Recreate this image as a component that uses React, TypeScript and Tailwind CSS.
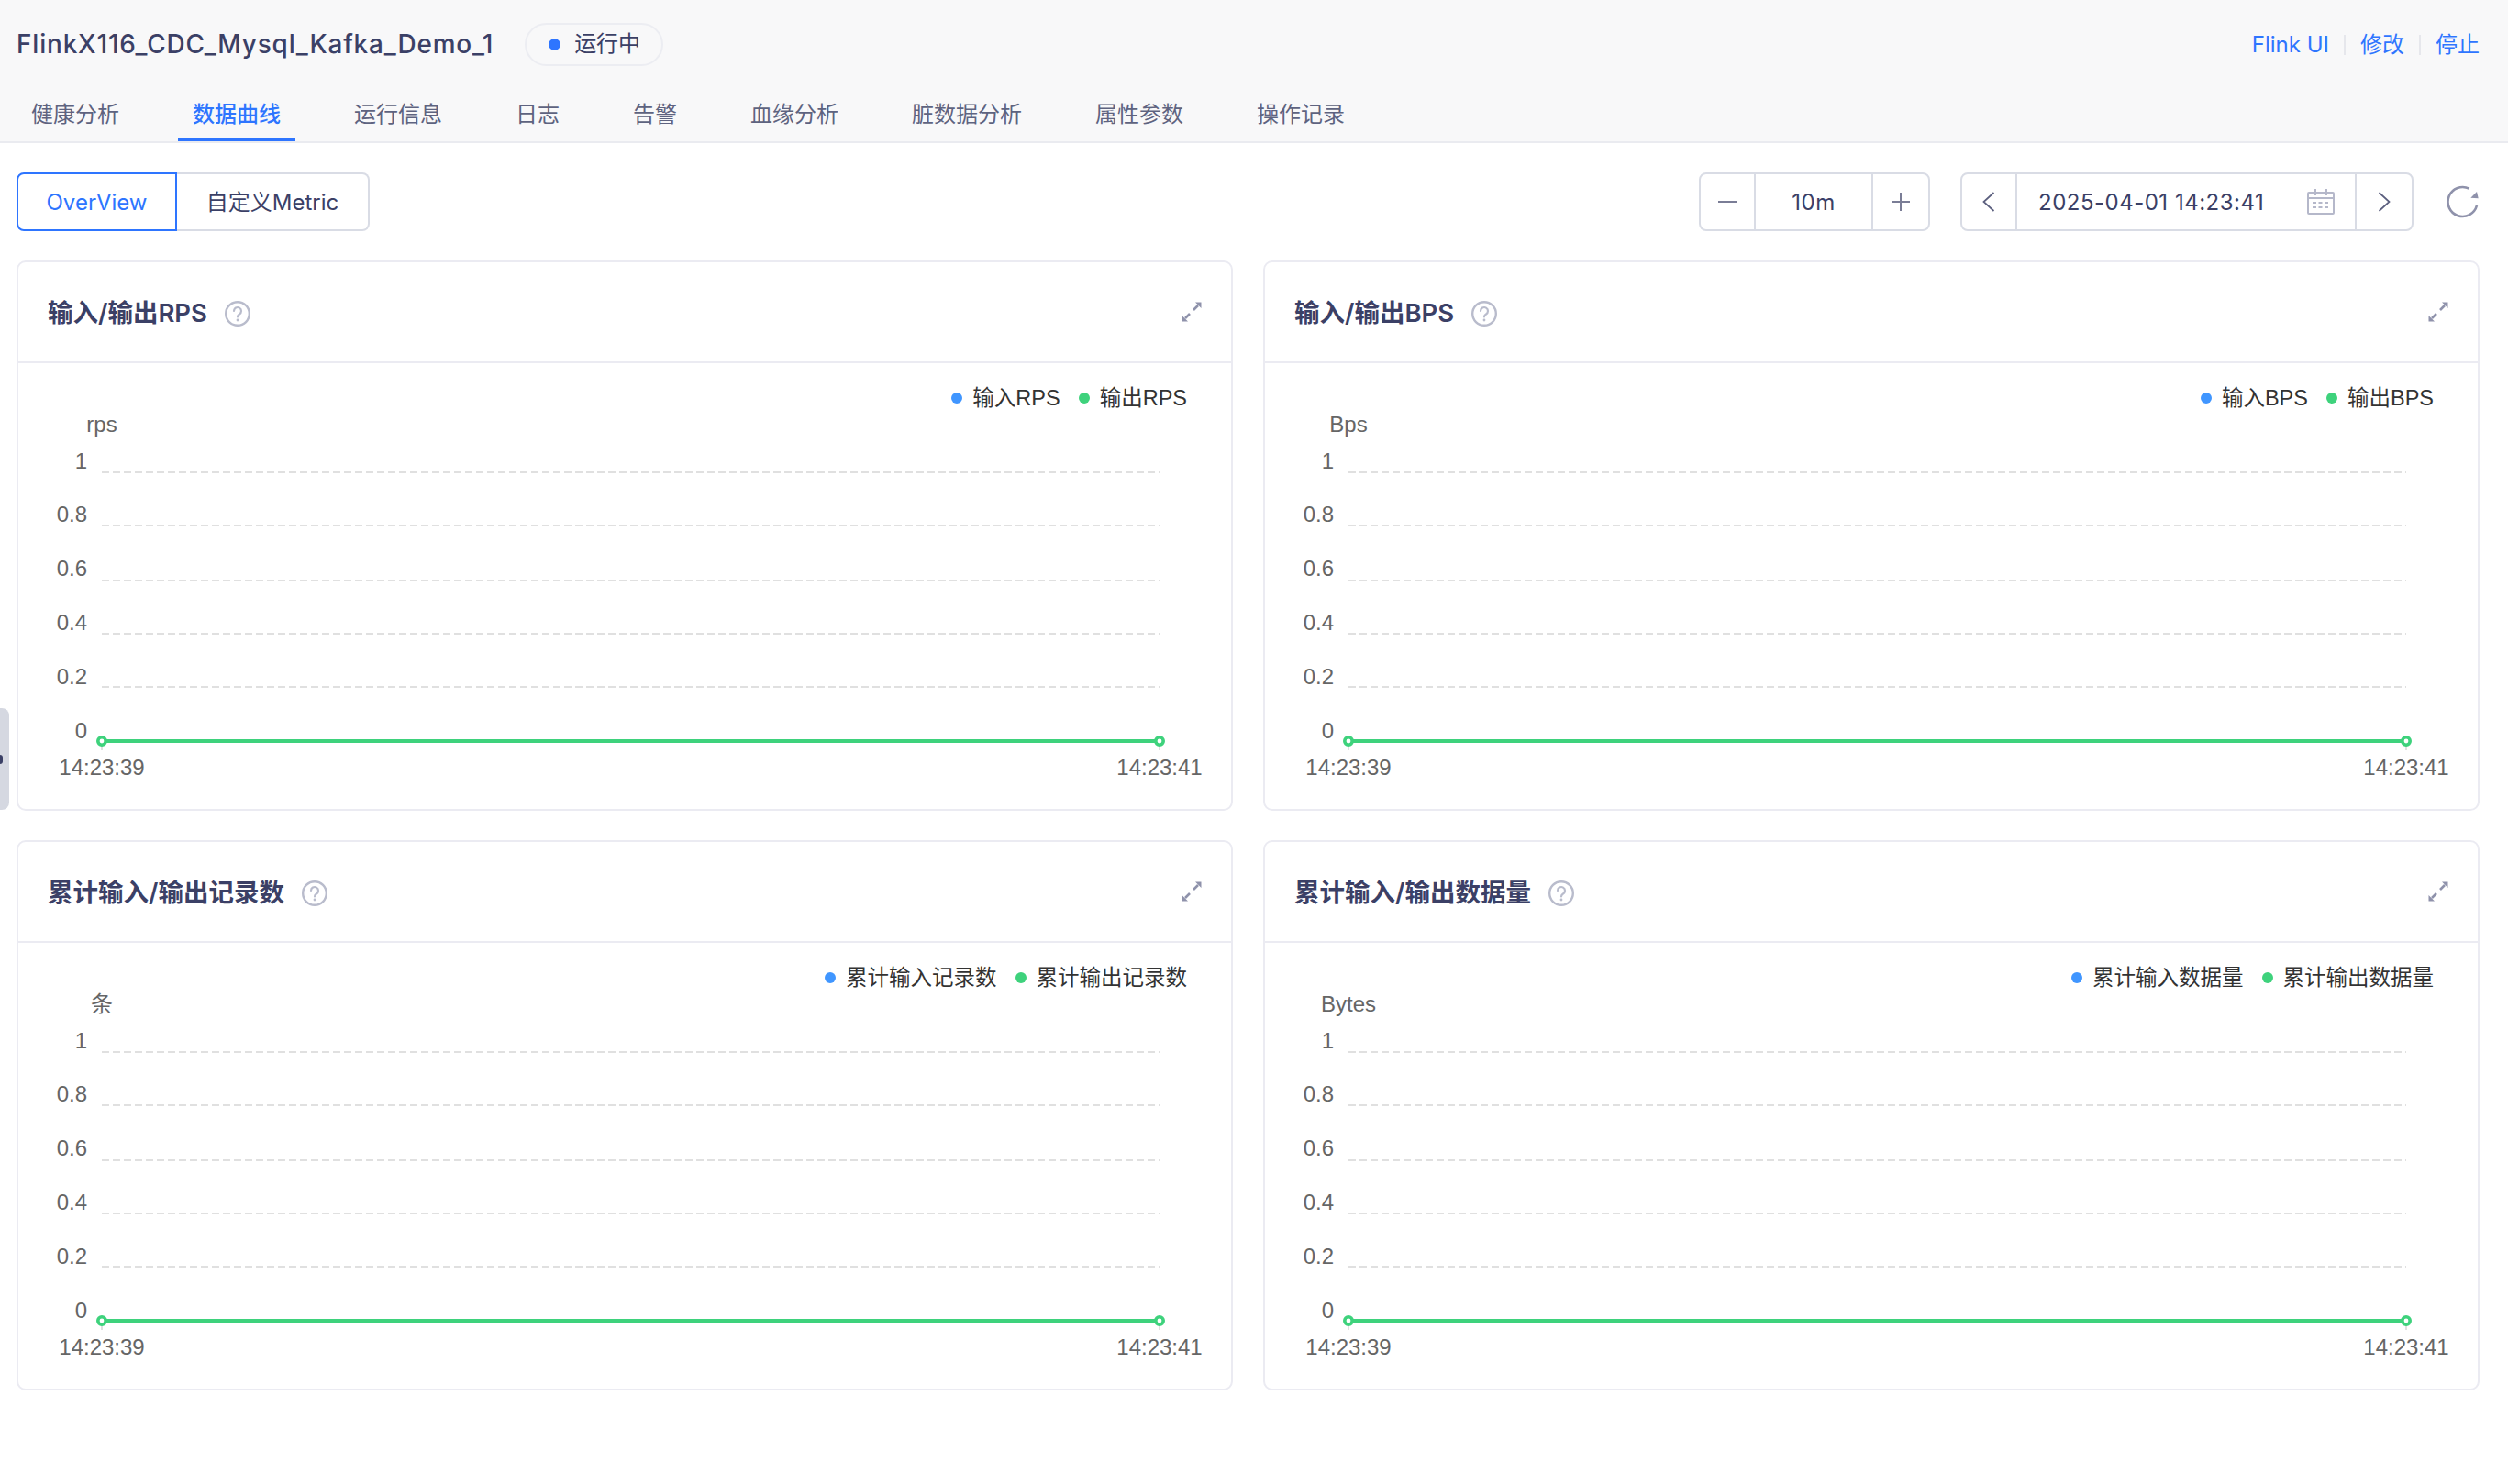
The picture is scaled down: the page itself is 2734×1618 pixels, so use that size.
const tabs = ["健康分析", "数据曲线", "运行信息", "日志", "告警", "血缘分析", "脏数据分析", "属性参数", "操作记录"];

const cards = [
  { title: "输入/输出RPS", unit: "rps", a: "输入RPS", b: "输出RPS" },
  { title: "输入/输出BPS", unit: "Bps", a: "输入BPS", b: "输出BPS" },
  { title: "累计输入/输出记录数", unit: "条", a: "累计输入记录数", b: "累计输出记录数" },
  { title: "累计输入/输出数据量", unit: "Bytes", a: "累计输入数据量", b: "累计输出数据量" },
];

// y positions inside the chart svg
const gridY = [67, 125, 185, 243, 301];
const tickY = [
  { label: "1", y: 54 },
  { label: "0.8", y: 112 },
  { label: "0.6", y: 171 },
  { label: "0.4", y: 230 },
  { label: "0.2", y: 289 },
  { label: "0", y: 348 },
];

function Chart({ unit }: { unit: string }) {
  const x0 = 91;
  const x1 = 1244;
  const zero = 360;
  return (
    <svg width="1322" height="433" className="block font-['Liberation_Sans','Noto_Sans_CJK_SC',sans-serif]">
      <text x={x0} y={14} fontSize="24" fill="#666" textAnchor="middle" dominantBaseline="central">
        {unit}
      </text>
      {gridY.map((y) => (
        <line key={y} x1={x0} x2={x1} y1={y} y2={y} stroke="#e0e0e0" strokeWidth="2" strokeDasharray="8 4" />
      ))}
      {tickY.map((t) => (
        <text key={t.label} x={75} y={t.y} fontSize="24" fill="#666" textAnchor="end" dominantBaseline="central">
          {t.label}
        </text>
      ))}
      <line x1={x0} x2={x0} y1={zero} y2={zero + 10} stroke="#e0e0e0" strokeWidth="2" />
      <line x1={x1} x2={x1} y1={zero} y2={zero + 10} stroke="#e0e0e0" strokeWidth="2" />
      <line x1={x0} x2={x1} y1={zero} y2={zero} stroke="#3ed27c" strokeWidth="4" />
      <circle cx={x0} cy={zero} r="4.2" fill="#fff" stroke="#3ed27c" strokeWidth="3.6" />
      <circle cx={x1} cy={zero} r="4.2" fill="#fff" stroke="#3ed27c" strokeWidth="3.6" />
      <text x={x0} y={388} fontSize="24" fill="#666" textAnchor="middle" dominantBaseline="central">
        14:23:39
      </text>
      <text x={x1} y={388} fontSize="24" fill="#666" textAnchor="middle" dominantBaseline="central">
        14:23:41
      </text>
    </svg>
  );
}

function HelpIcon() {
  return (
    <svg width="28" height="28" viewBox="0 0 28 28" fill="none" className="ml-[19px] shrink-0">
      <circle cx="14" cy="14" r="12.8" stroke="#b9bccc" strokeWidth="2.4" />
      <path d="M10 11a4 4 0 1 1 6 3.5c-1.4.8-2 1.6-2 3" stroke="#b9bccc" strokeWidth="2.2" strokeLinecap="round" />
      <circle cx="14" cy="21" r="1.4" fill="#b9bccc" />
    </svg>
  );
}

function ExpandIcon() {
  return (
    <svg width="24" height="24" viewBox="0 0 24 24" fill="none">
      <path d="M14 10l5-5M10 14l-5 5" stroke="#8f92ab" strokeWidth="2.6" />
      <path d="M22.5 1.5V8L16 1.5zM1.5 22.5V16L8 22.5z" fill="#8f92ab" />
    </svg>
  );
}

function CalendarIcon() {
  return (
    <svg width="32" height="30" viewBox="0 0 32 30" fill="none">
      <rect x="2" y="5" width="28" height="23" stroke="#b5b8ca" strokeWidth="2" rx="1" />
      <path d="M2 11h28" stroke="#b5b8ca" strokeWidth="2" />
      <path d="M10 1v7M22 1v7" stroke="#b5b8ca" strokeWidth="2" />
      <path d="M7 16h18M7 21h18" stroke="#b5b8ca" strokeWidth="2" strokeDasharray="4 2.5" />
    </svg>
  );
}

function RefreshIcon() {
  return (
    <svg width="40" height="40" viewBox="0 0 40 40" fill="none" className="ml-[33px]">
      <path d="M27.7 5.7A16 16 0 1 0 36 24" stroke="#8f92ab" strokeWidth="2.6" />
      <path d="M36 9l1.7 7.3-8.4-.6z" fill="#8f92ab" />
    </svg>
  );
}

function Chevron({ dir }: { dir: "left" | "right" }) {
  return (
    <svg width="14" height="22" viewBox="0 0 14 22" fill="none">
      <path d={dir === "left" ? "M12.5 1L1.5 11l11 10" : "M1.5 1l11 10-11 10"} stroke="#5b5f7e" strokeWidth="1.7" />
    </svg>
  );
}

function ChartCard({ title, unit, a, b }: { title: string; unit: string; a: string; b: string }) {
  return (
    <div className="h-[600px] rounded-[10px] border-2 border-[#ebebf2] bg-white">
      <div className="flex h-[110px] items-center justify-between border-b-2 border-[#ebebf2] pl-[32px] pr-[31px]">
        <div className="flex items-center pt-[3px]">
          <span className="text-[27.5px] font-semibold text-[#3b4066]">{title}</span>
          <HelpIcon />
        </div>
        <ExpandIcon />
      </div>
      <div className="flex h-[52px] items-end justify-end pr-[48px] font-['Liberation_Sans','Noto_Sans_CJK_SC',sans-serif] text-[23.5px] leading-[28px] text-[#333]">
        <span className="mr-[11px] mb-[8px] h-[12px] w-[12px] rounded-full bg-[#4096ff]"></span>
        <span>{a}</span>
        <span className="ml-[20px] mr-[11px] mb-[8px] h-[12px] w-[12px] rounded-full bg-[#3ed27c]"></span>
        <span>{b}</span>
      </div>
      <Chart unit={unit} />
    </div>
  );
}

export default function App() {
  return (
    <div className="relative min-h-screen bg-white font-[Inter,'Noto_Sans_CJK_SC',sans-serif] text-[#3b4066]">
      <div className="h-[156px] border-b-2 border-[#eaebf0] bg-[#f8f8f9]">
        <div className="flex h-[96px] items-center justify-between pl-[18px] pr-[31px]">
          <div className="flex items-center">
            <span className="pt-[1px] text-[27.9px] font-medium tracking-[0.85px]">FlinkX116_CDC_Mysql_Kafka_Demo_1</span>
            <div className="ml-[34px] flex h-[47px] w-[151px] items-center rounded-full border-2 border-[#ecedf2] pl-[24px] text-[24px]">
              <span className="mr-[15px] h-[13px] w-[13px] rounded-full bg-[#2e75ff]"></span>
              运行中
            </div>
          </div>
          <div className="flex items-center pt-[1px] text-[24px] text-[#2e75ff]">
            <span>Flink UI</span>
            <span className="mx-[16px] h-[22px] w-[2px] bg-[#e6e7ec]"></span>
            <span>修改</span>
            <span className="mx-[16px] h-[22px] w-[2px] bg-[#e6e7ec]"></span>
            <span>停止</span>
          </div>
        </div>
        <div className="flex h-[58px] gap-[48px] pl-[18px] text-[24px] text-[#5e6380]">
          {tabs.map((t) => (
            <div
              key={t}
              className={
                t === "数据曲线"
                  ? "flex h-[58px] items-center border-b-4 border-[#2e75ff] px-[16px] pt-[3px] font-medium text-[#2e75ff]"
                  : "flex h-[58px] items-center border-b-4 border-transparent px-[16px] pt-[3px]"
              }
            >
              {t}
            </div>
          ))}
        </div>
      </div>

      <div className="flex items-center justify-between pl-[18px] pr-[30px] pt-[32px] text-[24px]">
        <div className="flex h-[64px]">
          <div className="flex w-[175px] items-center justify-center rounded-l-lg border-2 border-[#2e75ff] pt-[1px] text-[#2e75ff]">
            OverView
          </div>
          <div className="flex w-[210px] items-center justify-center rounded-r-lg border-2 border-l-0 border-[#d9dce5] pt-[1px]">
            自定义Metric
          </div>
        </div>
        <div className="flex items-center">
          <div className="flex h-[64px] w-[252px] rounded-lg border-2 border-[#d9dce5]">
            <div className="flex w-[60px] items-center justify-center border-r-2 border-[#d9dce5]">
              <span className="h-[2px] w-[20px] bg-[#7a7d96]"></span>
            </div>
            <div className="flex flex-1 items-center justify-center pt-[1px] tracking-[0.5px]">10m</div>
            <div className="flex w-[62px] items-center justify-center border-l-2 border-[#d9dce5]">
              <svg width="20" height="20" viewBox="0 0 20 20" fill="none">
                <path d="M10 0v20M0 10h20" stroke="#7a7d96" strokeWidth="2" />
              </svg>
            </div>
          </div>
          <div className="ml-[33px] flex h-[64px] w-[494px] rounded-lg border-2 border-[#d9dce5]">
            <div className="flex w-[60px] items-center justify-center border-r-2 border-[#d9dce5]">
              <Chevron dir="left" />
            </div>
            <div className="flex flex-1 items-center justify-between pl-[23px] pr-[21px]">
              <span className="pt-[1px] tracking-[0.5px]">2025-04-01 14:23:41</span>
              <CalendarIcon />
            </div>
            <div className="flex w-[62px] items-center justify-center border-l-2 border-[#d9dce5]">
              <Chevron dir="right" />
            </div>
          </div>
          <RefreshIcon />
        </div>
      </div>

      <div className="grid grid-cols-2 gap-x-[33px] gap-y-[32px] pl-[18px] pr-[31px] pt-[32px]">
        {cards.map((c) => (
          <ChartCard key={c.title} {...c} />
        ))}
      </div>

      {/* sidebar handle */}
      <div className="absolute left-0 top-[772px] flex h-[111px] w-[10px] items-center rounded-r-lg bg-[#d5d8e1]">
        <span className="h-[10px] w-[3px] rounded-r-full bg-[#3b4066]"></span>
      </div>
    </div>
  );
}
